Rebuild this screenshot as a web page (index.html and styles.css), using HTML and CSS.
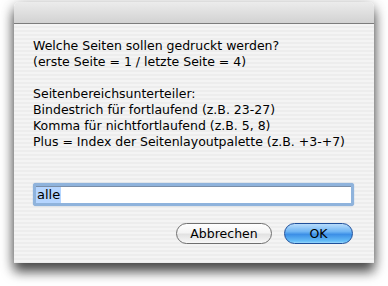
FILE: index.html
```html
<!DOCTYPE html>
<html>
<head>
<meta charset="utf-8">
<link rel="stylesheet" href="styles.css">
</head>
<body>
<div class="window">
  <div class="titlebar"></div>
  <div class="content">
    <div class="message">
      <div class="line">Welche Seiten sollen gedruckt werden?</div>
      <div class="line">(erste Seite = 1 / letzte Seite = 4)</div>
      <div class="line">&nbsp;</div>
      <div class="line">Seitenbereichsunterteiler:</div>
      <div class="line">Bindestrich für fortlaufend (z.B. 23-27)</div>
      <div class="line">Komma für nichtfortlaufend (z.B. 5, 8)</div>
      <div class="line">Plus = Index der Seitenlayoutpalette (z.B. +3-+7)</div>
    </div>
    <div class="field"><div class="field-inner"><span class="sel">alle</span></div></div>
    <div class="buttons">
      <div class="btn cancel">Abbrechen</div>
      <div class="btn ok">OK</div>
    </div>
  </div>
</div>
</body>
</html>
```
FILE: styles.css
```css
html, body { margin: 0; padding: 0; background: #fff; }
body { width: 388px; height: 286px; overflow: hidden; font-family: "DejaVu Sans", "Liberation Sans", sans-serif; }
.window {
  margin: 2px 0 0 14px;
  width: 360px;
  height: 261px;
  border-radius: 5px 5px 0 0;
  box-shadow: 0 9px 12px rgba(0,0,0,0.6), 0 3px 14px rgba(0,0,0,0.35);
  background: repeating-linear-gradient(to bottom, #ededed 0px, #ededed 2px, #f4f4f4 2px, #f4f4f4 4px);
  overflow: hidden;
}
.titlebar {
  height: 21px;
  background: linear-gradient(to bottom, #ececec, #d2d2d2);
  border-bottom: 1px solid #7c7c7c;
  border-radius: 5px 5px 0 0;
}
.content { padding: 14px 20px 0 19px; }
.message { font-size: 12.5px; line-height: 16px; color: #000; }
.line { white-space: nowrap; }
.field {
  margin-top: 33px;
  height: 23px;
  border-radius: 3px;
  background: #8fb3dc;
  padding: 3px;
  box-sizing: border-box;
  box-shadow: 0 0 1px #6c96c8;
}
.field-inner {
  height: 17px;
  background: #fff;
  border-top: 1px solid #7a8ea8;
  box-sizing: border-box;
  font-size: 13px;
  line-height: 16px;
}
.sel { background: #b5d5ff; padding: 0 1px; display: inline-block; height: 16px; }
.buttons { display: flex; justify-content: flex-end; gap: 12px; margin-top: 17px; padding-right: 1px; }
.btn {
  height: 21px;
  box-sizing: border-box;
  border-radius: 11px;
  font-size: 12.5px;
  line-height: 19px;
  text-align: center;
  color: #000;
}
.cancel {
  width: 96px;
  border: 1px solid #6f6f6f;
  background: linear-gradient(to bottom, #ffffff 0%, #f4f4f4 45%, #e2e2e2 55%, #f8f8f8 100%);
}
.ok {
  width: 69px;
  border: 1px solid #1f4f9a;
  background: linear-gradient(to bottom, #b8dcfb 0%, #6fb5f4 40%, #3c8fe6 55%, #65bdf7 90%, #9ad7fb 100%);
}
```
